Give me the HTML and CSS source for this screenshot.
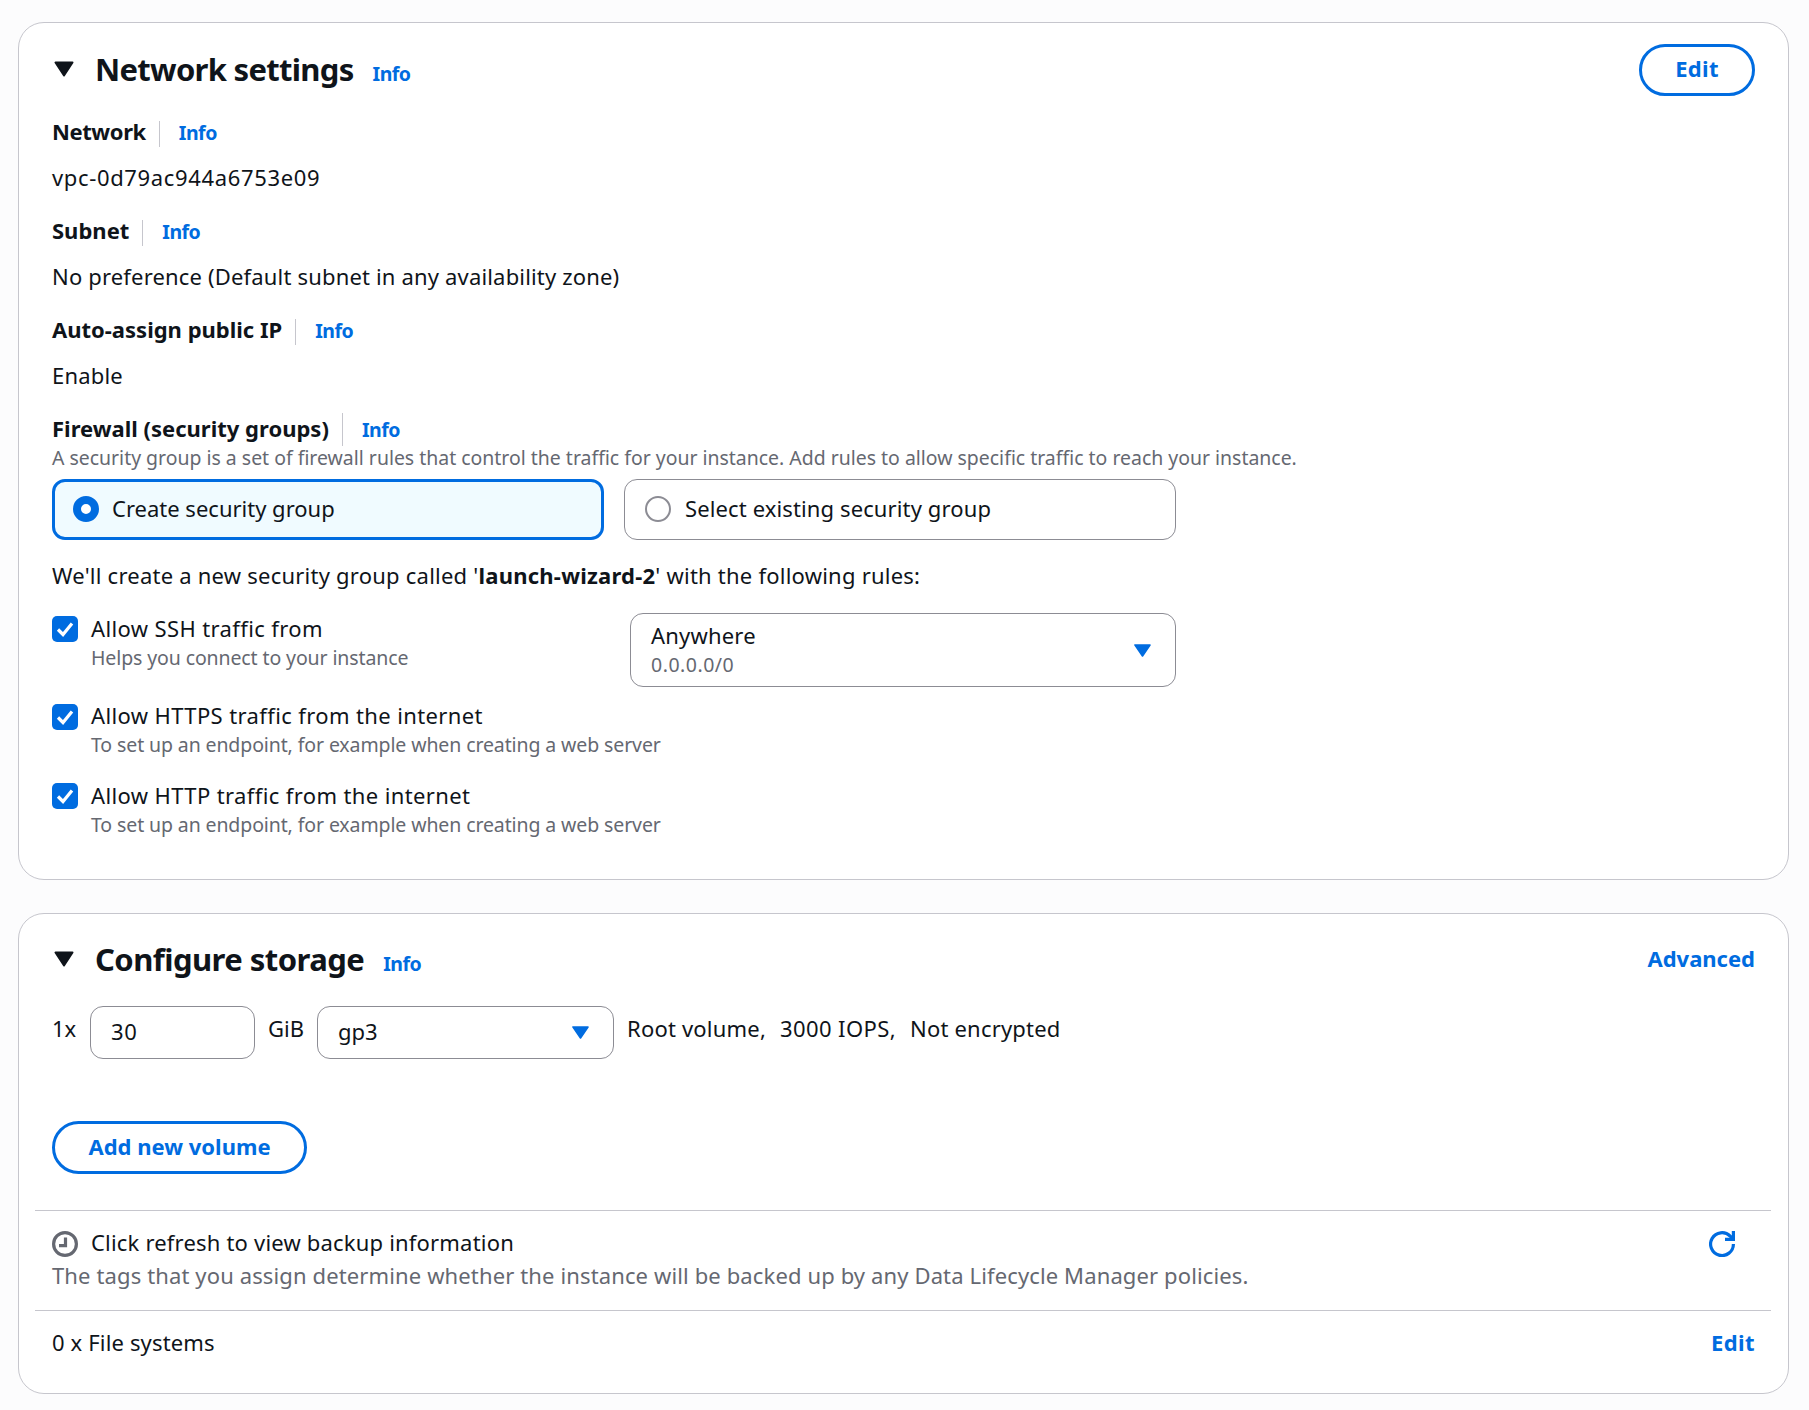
FILE: index.html
```html
<!DOCTYPE html>
<html lang="en">
<head>
    <meta charset="UTF-8">
    <meta name="viewport" content="width=device-width, initial-scale=1.0">
    <title>Launch an instance</title>
    <link rel="stylesheet" href="styles.css">
</head>
<body>

<!-- Network settings -->
<section class="card network">
    <div class="card-header">
        <svg class="toggle" viewBox="0 0 20 16"><path d="M1.5 1.5h17L10 14.5z" fill="#0f141a" stroke="#0f141a" stroke-width="2" stroke-linejoin="round"/></svg>
        <h2 class="title-network">Network settings</h2>
        <a class="info" href="#">Info</a>
        <button class="btn btn-edit">Edit</button>
    </div>

    <div class="field">
        <div class="label"><span class="l-network">Network</span><a class="info" href="#">Info</a></div>
        <p class="value t-vpc">vpc-0d79ac944a6753e09</p>
    </div>
    <div class="field">
        <div class="label"><span>Subnet</span><a class="info" href="#">Info</a></div>
        <p class="value">No preference (Default subnet in any availability zone)</p>
    </div>
    <div class="field">
        <div class="label"><span>Auto-assign public IP</span><a class="info" href="#">Info</a></div>
        <p class="value">Enable</p>
    </div>

    <div class="label label-tall"><span>Firewall (security groups)</span><a class="info" href="#">Info</a></div>
    <p class="hint t-firewall">A security group is a set of firewall rules that control the traffic for your instance. Add rules to allow specific traffic to reach your instance.</p>

    <div class="tiles">
        <label class="tile selected"><span class="radio"></span><span class="t-create">Create security group</span></label>
        <label class="tile"><span class="radio"></span><span class="t-select">Select existing security group</span></label>
    </div>

    <p class="rules-text">We'll create a new security group called '<b>launch-wizard-2</b>' with the following rules:</p>

    <div class="rule rule-ssh">
        <svg class="checkbox" viewBox="0 0 26 26"><rect width="26" height="26" rx="5" fill="#006ce0"/><path d="M6 13.5l5 5L20 7.5" fill="none" stroke="#fff" stroke-width="3.2"/></svg>
        <div class="rule-text">
            <p>Allow SSH traffic from</p>
            <p class="hint">Helps you connect to your instance</p>
        </div>
        <div class="select select-source">
            <div>
                <p class="t-anywhere">Anywhere</p>
                <p class="hint t-cidr">0.0.0.0/0</p>
            </div>
            <svg class="caret" viewBox="0 0 17 13"><path d="M1 1h15L8.5 12z" fill="#006ce0" stroke="#006ce0" stroke-width="1.6" stroke-linejoin="round"/></svg>
        </div>
    </div>
    <div class="rule">
        <svg class="checkbox" viewBox="0 0 26 26"><rect width="26" height="26" rx="5" fill="#006ce0"/><path d="M6 13.5l5 5L20 7.5" fill="none" stroke="#fff" stroke-width="3.2"/></svg>
        <div class="rule-text">
            <p>Allow HTTPS traffic from the internet</p>
            <p class="hint">To set up an endpoint, for example when creating a web server</p>
        </div>
    </div>
    <div class="rule">
        <svg class="checkbox" viewBox="0 0 26 26"><rect width="26" height="26" rx="5" fill="#006ce0"/><path d="M6 13.5l5 5L20 7.5" fill="none" stroke="#fff" stroke-width="3.2"/></svg>
        <div class="rule-text">
            <p>Allow HTTP traffic from the internet</p>
            <p class="hint">To set up an endpoint, for example when creating a web server</p>
        </div>
    </div>
</section>

<!-- Configure storage -->
<section class="card storage">
    <div class="card-header">
        <svg class="toggle" viewBox="0 0 20 16"><path d="M1.5 1.5h17L10 14.5z" fill="#0f141a" stroke="#0f141a" stroke-width="2" stroke-linejoin="round"/></svg>
        <h2 class="title-storage">Configure storage</h2>
        <a class="info" href="#">Info</a>
        <a class="link link-advanced" href="#">Advanced</a>
    </div>

    <div class="volume">
        <span class="v-count">1x</span>
        <div class="input">30</div>
        <span class="v-unit">GiB</span>
        <div class="select select-type">
            <span>gp3</span>
            <svg class="caret" viewBox="0 0 17 13"><path d="M1 1h15L8.5 12z" fill="#006ce0" stroke="#006ce0" stroke-width="1.6" stroke-linejoin="round"/></svg>
        </div>
        <span class="v-root">Root volume,</span>
        <span class="v-iops">3000 IOPS,</span>
        <span class="v-enc">Not encrypted</span>
    </div>

    <button class="btn btn-add">Add new volume</button>

    <div class="row backup">
        <div>
            <div class="backup-title">
                <svg class="icon" viewBox="0 0 26 26" fill="none" stroke="#656871" stroke-width="3.2"><circle cx="13" cy="13" r="11.4"/><path d="M13.5 6.5v8.2H7"/></svg>
                <span class="t-refresh">Click refresh to view backup information</span>
            </div>
            <p class="t-tags">The tags that you assign determine whether the instance will be backed up by any Data Lifecycle Manager policies.</p>
        </div>
        <svg class="icon refresh" viewBox="0 0 26 26" fill="none" stroke="#006ce0" stroke-width="3.2"><path d="M24.4 13A11.4 11.4 0 1 1 21.2 5.200L24 8"/><path d="M24.4 0v8.400H16"/></svg>
    </div>

    <div class="row files">
        <span class="t-files">0 x File systems</span>
        <a class="link link-edit" href="#">Edit</a>
    </div>
</section>

</body>
</html>
```
FILE: styles.css
```css
* {
    box-sizing: border-box;
}

body {
    font-family: "Noto Sans", sans-serif;
    font-size: 22px;
    line-height: 33px;
    color: #0f141a;
    margin: 0;
    padding: 22px 20px 0 18px;
    background-color: #fcfcfd;
    white-space: nowrap;
}

p, h2 {
    margin: 0;
}

a {
    color: #006ce0;
    text-decoration: none;
    font-weight: bold;
}

svg {
    display: block;
    flex: none;
}

.card {
    background-color: #fff;
    border: 1px solid #c6c6cd;
    border-radius: 26px;
    padding: 21px 33px 0;
}

.network {
    height: 858px;
}

.storage {
    height: 481px;
    margin-top: 33px;
    padding-top: 20px;
}

/* Card header */
.card-header {
    display: flex;
    align-items: baseline;
    height: 53px;
}

.toggle {
    width: 20px;
    height: 16px;
    margin-left: 2px;
    align-self: flex-start;
    margin-top: 17px;
}

h2 {
    font-size: 31px;
    line-height: 50px;
    letter-spacing: -0.7px;
    margin-left: 21px;
}

.title-storage {
    letter-spacing: -0.55px;
}

.info {
    font-size: 19.5px;
    line-height: 28px;
    letter-spacing: -0.5px;
}

h2 + .info {
    margin-left: 19px;
}

.btn {
    font-family: inherit;
    font-size: 22px;
    font-weight: bold;
    line-height: 33px;
    color: #006ce0;
    background-color: #fff;
    border: 3px solid #006ce0;
    border-radius: 27px;
    height: 53px;
    padding: 0 0 2px;
}

.btn-edit {
    width: 116px;
    height: 52px;
    margin-left: auto;
    align-self: flex-start;
    padding-bottom: 3px;
    letter-spacing: 0.3px;
}

.link {
    margin-left: auto;
}

.link-advanced {
    align-self: flex-start;
    margin-top: 8px;
}

.link-edit {
    letter-spacing: 0.4px;
}

/* Fields */
.field {
    margin-bottom: 20px;
}

.card-header + .field {
    margin-top: 18px;
}

.label {
    display: flex;
    align-items: baseline;
    height: 33px;
    font-weight: bold;
}

.l-network {
    letter-spacing: -0.4px;
}

.label .info {
    position: relative;
    margin-left: 33px;
}

.label .info::before {
    content: "";
    position: absolute;
    left: -20px;
    top: 2px;
    width: 1px;
    height: 26px;
    background-color: #c6c6cd;
}

.label-tall .info::before {
    top: -3px;
    height: 33px;
}

.value {
    margin-top: 13px;
    letter-spacing: 0.17px;
}

.t-vpc {
    letter-spacing: 0.65px;
}

.hint {
    font-size: 19.5px;
    line-height: 26px;
    color: #656871;
}

.t-firewall {
    font-size: 19.46px;
}

/* Security group tiles */
.tiles {
    display: flex;
    gap: 20px;
    margin-top: 8px;
}

.tile {
    display: flex;
    align-items: center;
    width: 552px;
    height: 61px;
    border: 1px solid #8c8c94;
    border-radius: 13px;
    padding: 0 20px 2px;
}

.tile.selected {
    border: 3px solid #006ce0;
    background-color: #f0fbff;
    padding-left: 18px;
}

.radio {
    width: 26px;
    height: 26px;
    border: 2px solid #8c8c94;
    border-radius: 50%;
    margin-right: 14px;
    background-color: #fff;
}

.selected .radio {
    border: 8px solid #006ce0;
}

.selected .radio + span {
    margin-left: -1px;
}

.t-select {
    letter-spacing: 0.12px;
}

.rules-text {
    margin: 19px 0 20px;
    letter-spacing: 0.23px;
}

/* Rules */
.rule {
    display: flex;
    align-items: flex-start;
    height: 59px;
    margin-bottom: 21px;
}

.rule-ssh {
    height: 75px;
    margin-bottom: 12px;
}

.checkbox {
    width: 26px;
    height: 26px;
    margin: 4px 13px 0 0;
}

.rule-ssh + .rule .checkbox {
    margin-top: 5px;
}

.rule-text {
    width: 539px;
    letter-spacing: 0.38px;
}

.rule-text .hint {
    letter-spacing: -0.11px;
}

.select {
    display: flex;
    align-items: center;
    justify-content: space-between;
    border: 1px solid #8c8c94;
    border-radius: 13px;
    padding: 0 24px 0 20px;
}

.select-source {
    width: 546px;
    height: 74px;
    margin-top: 1px;
}

.select-source div {
    margin-top: -3px;
}

.t-anywhere {
    letter-spacing: 0.2px;
}

.t-cidr {
    letter-spacing: 0.5px;
}

.caret {
    width: 17px;
    height: 13px;
}

/* Volume row */
.volume {
    display: flex;
    align-items: flex-start;
    margin-top: 19px;
    margin-bottom: 62px;
}

.volume > span {
    margin-top: 6px;
}

.v-count {
    width: 38px;
}

.input {
    width: 165px;
    height: 53px;
    line-height: 49px;
    letter-spacing: 0.7px;
    border: 1px solid #8c8c94;
    border-radius: 13px;
    padding-left: 20px;
}

.v-unit {
    width: 62px;
    padding-left: 13px;
}

.select-type {
    width: 297px;
    height: 53px;
    margin-right: 13px;
}

.select-type span {
    margin-top: -2px;
}

.v-root {
    width: 153px;
    letter-spacing: 0.2px;
}

.v-iops {
    width: 130px;
    letter-spacing: 0.4px;
}

.v-enc {
    letter-spacing: 0.2px;
}

.btn-add {
    display: block;
    width: 255px;
}

/* Bottom rows */
.row {
    display: flex;
    justify-content: space-between;
    margin: 0 -16px 0 -17px;
    padding: 15px 16px 0 17px;
    border-top: 1px solid #c6c6cd;
}

.backup {
    margin-top: 36px;
    height: 100px;
}

.backup-title {
    display: flex;
    letter-spacing: 0.19px;
}

.icon {
    width: 26px;
    height: 26px;
    margin: 5px 13px 0 0;
}

.refresh {
    margin-right: 20px;
}

.t-tags {
    color: #656871;
    letter-spacing: 0.128px;
}

.t-files {
    letter-spacing: 0.15px;
}
```
